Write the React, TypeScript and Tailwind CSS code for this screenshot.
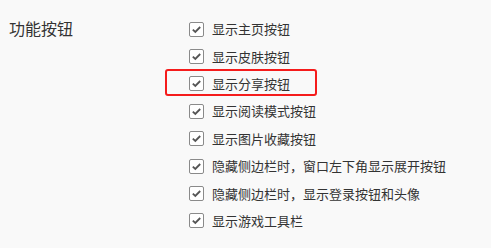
import React from 'react';

const items = [
  '显示主页按钮',
  '显示皮肤按钮',
  '显示分享按钮',
  '显示阅读模式按钮',
  '显示图片收藏按钮',
  '隐藏侧边栏时，窗口左下角显示展开按钮',
  '隐藏侧边栏时，显示登录按钮和头像',
  '显示游戏工具栏',
];

const Check = () => (
  <span className="relative flex h-[15px] w-[15px] shrink-0 items-center justify-center rounded-[2px] border border-[#8a8a8a] bg-white">
    <svg width="11" height="11" viewBox="0 0 11 11">
      <path d="M1.8 5.6 L4.3 8 L9.2 3" fill="none" stroke="#555" strokeWidth="1.8" />
    </svg>
  </span>
);

export default function App() {
  return (
    <div
      className="flex h-[248px] w-[491px] bg-[#f9f9f9] text-[#333]"
      style={{ fontFamily: '"Noto Sans CJK SC", "Microsoft YaHei", sans-serif' }}
    >
      <div className="w-[189px] shrink-0 pl-[9px] pt-[17px] text-[16px] leading-[22px]">功能按钮</div>
      <div className="flex flex-col pt-[15.5px]">
        {items.map((t, i) => (
          <div key={t} className="flex h-[27.4px] items-center">
            <div
              className={
                i === 2
                  ? '-ml-[24px] -mt-[2px] flex h-[27px] w-[152px] items-center rounded-[3px] border-2 border-[#f51c1c] pl-[22px] pt-[2px]'
                  : 'flex items-center'
              }
            >
              <Check />
              <span className="ml-[8px] whitespace-nowrap text-[13px] leading-[16px]">{t}</span>
            </div>
          </div>
        ))}
      </div>
    </div>
  );
}
